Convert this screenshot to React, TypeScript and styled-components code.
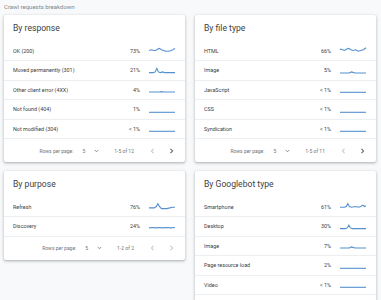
import React from 'react'
import styled, { createGlobalStyle } from 'styled-components'

const GlobalStyle = createGlobalStyle`
  body {
    margin: 0;
    background: #f8f9fa;
    font-family: Roboto, 'Liberation Sans', sans-serif;
  }
`

const Page = styled.div`
  padding: 2px 5px 0 4px;
`

const Heading = styled.div`
  font-size: 6px;
  line-height: 9px;
  color: #80868b;
  margin-bottom: 4px;
`

const Grid = styled.div`
  display: grid;
  grid-template-columns: 181px 181px;
  column-gap: 10px;
  row-gap: 9px;
  align-items: start;
`

const Card = styled.section`
  background: #fff;
  border-radius: 2px;
  box-shadow: 0 1px 2px rgba(60, 64, 67, 0.25), 0 1px 3px 1px rgba(60, 64, 67, 0.12);
`

const CardTitle = styled.h2`
  margin: 0;
  padding: 0 9px;
  height: 26.5px;
  line-height: 26px;
  font-size: 8.6px;
  font-weight: 400;
  color: #3c4043;
`

const Row = styled.div`
  display: flex;
  align-items: center;
  box-sizing: border-box;
  height: 19.5px;
  padding: 0 10px 0 9px;
  border-bottom: 1px solid #eceff1;
  font-size: 5.4px;
  color: #3c4043;
`

const Label = styled.span`
  flex: 1;
`

const Pct = styled.span`
  width: 30px;
  text-align: right;
`

const Spark = styled.svg`
  margin-left: 9px;
  width: 26px;
  height: 7px;
  overflow: visible;
`

const Footer = styled.div`
  display: flex;
  align-items: center;
  justify-content: flex-end;
  height: 23px;
  padding-right: 11px;
  font-size: 5px;
  color: #70757a;
`

const PerPage = styled.span`
  margin-right: 9px;
`

const Select = styled.span`
  display: inline-flex;
  align-items: center;
  gap: 9px;
  margin-right: 15px;
`

const Range = styled.span`
  margin-right: 16px;
`

const PageBtn = styled.svg<{ $on?: boolean; $next?: boolean }>`
  width: 5px;
  height: 6px;
  margin-left: ${(p) => (p.$next ? '14px' : '0')};
  stroke: ${(p) => (p.$on ? '#5f6368' : '#c4c7c9')};
  fill: none;
  stroke-width: 1.1;
`

const FLAT = '0,9 50,9'

type Item = { name: string; pct: string; line: string }

const Sparkline = ({ line }: { line: string }) => (
  <Spark viewBox="0 0 50 10" preserveAspectRatio="none">
    <polyline
      points={line}
      fill="none"
      stroke="#5590cf"
      strokeWidth="1.1"
      vectorEffect="non-scaling-stroke"
    />
  </Spark>
)

const Pager = ({ range, hasNext }: { range: string; hasNext: boolean }) => (
  <Footer>
    <PerPage>Rows per page:</PerPage>
    <Select>
      5
      <svg width="5" height="4" viewBox="0 0 5 4">
        <path d="M0.8 1 L2.5 2.8 L4.2 1" fill="none" stroke="#70757a" strokeWidth="0.8" />
      </svg>
    </Select>
    <Range>{range}</Range>
    <PageBtn viewBox="0 0 5 6">
      <path d="M3.5 0.8 L1.5 3 L3.5 5.2" />
    </PageBtn>
    <PageBtn viewBox="0 0 5 6" $on={hasNext} $next>
      <path d="M1.5 0.8 L3.5 3 L1.5 5.2" />
    </PageBtn>
  </Footer>
)

const Breakdown = ({
  title,
  items,
  range,
  hasNext,
}: {
  title: string
  items: Item[]
  range?: string
  hasNext?: boolean
}) => (
  <Card>
    <CardTitle>{title}</CardTitle>
    {items.map((it) => (
      <Row key={it.name}>
        <Label>{it.name}</Label>
        <Pct>{it.pct}</Pct>
        <Sparkline line={it.line} />
      </Row>
    ))}
    {range && <Pager range={range} hasNext={!!hasNext} />}
  </Card>
)

const byResponse: Item[] = [
  { name: 'OK (200)', pct: '73%', line: '0,5 5,4 9,5 13,5 17,3 20,2 24,4 28,5 32,6 38,6 43,5 46,4 50,2' },
  { name: 'Moved permanently (301)', pct: '21%', line: '0,8 8,8 12,7 15,2 18,7 22,8 26,7 30,8 50,8' },
  { name: 'Other client error (4XX)', pct: '4%', line: '0,8.5 20,8.5 24,8 28,8.5 50,8.5' },
  { name: 'Not found (404)', pct: '1%', line: FLAT },
  { name: 'Not modified (304)', pct: '< 1%', line: FLAT },
]

const byFileType: Item[] = [
  { name: 'HTML', pct: '66%', line: '0,3 5,4 9,5 13,3 17,2 21,4 25,5 30,4 35,6 40,5 45,4 50,1' },
  { name: 'Image', pct: '5%', line: '0,8.5 18,8.5 22,7 26,8 30,8.5 50,8.5' },
  { name: 'JavaScript', pct: '< 1%', line: FLAT },
  { name: 'CSS', pct: '< 1%', line: FLAT },
  { name: 'Syndication', pct: '< 1%', line: FLAT },
]

const byPurpose: Item[] = [
  { name: 'Refresh', pct: '76%', line: '0,7 10,7 14,5 17,1 20,5 24,8 34,8 40,7 45,6 50,6' },
  { name: 'Discovery', pct: '24%', line: '0,7 8,6.5 14,7 20,6.5 26,7 34,6.5 42,7 50,6.5' },
]

const byGooglebot: Item[] = [
  { name: 'Smartphone', pct: '61%', line: '0,6 8,6 12,5 15,1 18,5 22,6 30,5 36,6 40,5 44,3 47,5 50,4' },
  { name: 'Desktop', pct: '30%', line: '0,8 10,8 14,7 17,3 20,7 24,8 50,8' },
  { name: 'Image', pct: '7%', line: '0,8.5 18,8.5 22,7 26,8 30,8.5 50,8.5' },
  { name: 'Page resource load', pct: '2%', line: FLAT },
  { name: 'Video', pct: '< 1%', line: FLAT },
]

export default function App() {
  return (
    <>
      <GlobalStyle />
      <Page>
        <Heading>Crawl requests breakdown</Heading>
        <Grid>
          <Breakdown title="By response" items={byResponse} range="1-5 of 12" hasNext />
          <Breakdown title="By file type" items={byFileType} range="1-5 of 11" hasNext />
          <Breakdown title="By purpose" items={byPurpose} range="1-2 of 2" />
          <Breakdown title="By Googlebot type" items={byGooglebot} range="1-5 of 6" hasNext />
        </Grid>
      </Page>
    </>
  )
}
